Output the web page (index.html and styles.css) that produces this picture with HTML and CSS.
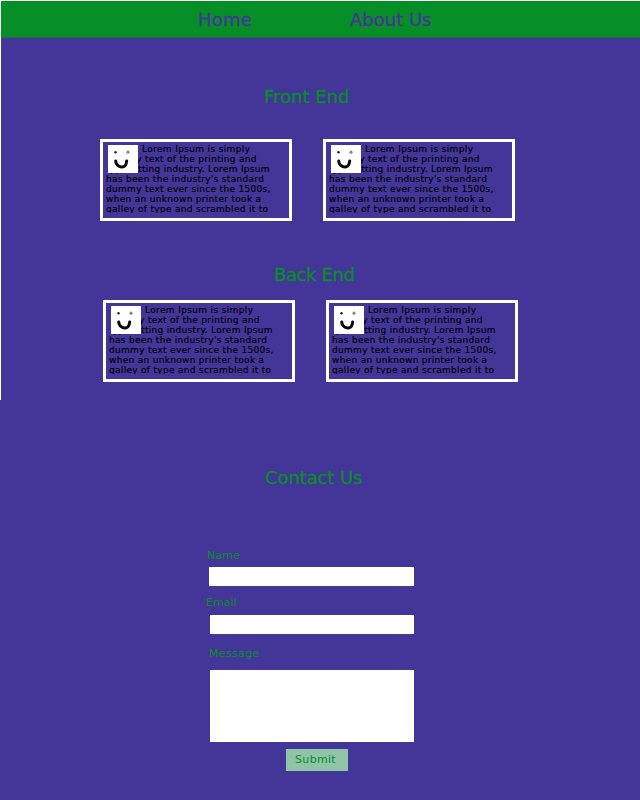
FILE: index.html
```
<!DOCTYPE html>
<html lang="en">
<head>
<meta charset="utf-8">
<title>Home</title>
<link rel="stylesheet" href="styles.css">
</head>
<body>
<svg class="defs" width="0" height="0"><symbol id="face" viewBox="0 0 30 28"><rect width="30" height="28" fill="#fff"/><circle cx="7.500" cy="7.200" r="1.200" fill="#222"/><circle cx="20" cy="7.200" r="1.600" fill="#888"/><path d="M7.700 16C8 19.500 10.500 21.800 13.500 22C16 22 17.500 21 18 19L18.700 16" fill="none" stroke="#080808" stroke-width="3" stroke-linecap="round"/></symbol></svg>
<div class="page">
<nav class="nav"><a class="home">Home</a><a class="about">About Us</a></nav>
<main>
<section class="front"><h2>Front End</h2><div class="cards">
<article class="card"><svg class="face"><use href="#face"/></svg><p><span class="first">Lorem Ipsum is simply</span><span>dummy text of the printing and</span><span>typesetting industry. Lorem Ipsum</span><span>has been the industry's standard</span><span>dummy text ever since the 1500s,</span><span>when an unknown printer took a</span><span>galley of type and scrambled it to</span></p></article>
<article class="card"><svg class="face"><use href="#face"/></svg><p><span class="first">Lorem Ipsum is simply</span><span>dummy text of the printing and</span><span>typesetting industry. Lorem Ipsum</span><span>has been the industry's standard</span><span>dummy text ever since the 1500s,</span><span>when an unknown printer took a</span><span>galley of type and scrambled it to</span></p></article>
</div></section>
<section class="back"><h2>Back End</h2><div class="cards">
<article class="card"><svg class="face"><use href="#face"/></svg><p><span class="first">Lorem Ipsum is simply</span><span>dummy text of the printing and</span><span>typesetting industry. Lorem Ipsum</span><span>has been the industry's standard</span><span>dummy text ever since the 1500s,</span><span>when an unknown printer took a</span><span>galley of type and scrambled it to</span></p></article>
<article class="card"><svg class="face"><use href="#face"/></svg><p><span class="first">Lorem Ipsum is simply</span><span>dummy text of the printing and</span><span>typesetting industry. Lorem Ipsum</span><span>has been the industry's standard</span><span>dummy text ever since the 1500s,</span><span>when an unknown printer took a</span><span>galley of type and scrambled it to</span></p></article>
</div></section>
<section class="contact"><h2>Contact Us</h2>
<form>
<label class="l-name" for="name">Name</label><input id="name">
<label class="l-email" for="email">Email</label><input id="email">
<label class="l-message" for="message">Message</label><textarea id="message"></textarea>
<button type="button">Submit</button>
</form></section>
</main>
</div>
</body>
</html>
```
FILE: styles.css
```
* { box-sizing: border-box; }
body { margin: 0; font-family: "DejaVu Sans", sans-serif; background: #443599; }
.defs { display: block; }
.page { height: 800px; overflow: hidden; border-top: 1px solid #fff; background: linear-gradient(#fff, #fff) 0 0 / 1px 399px no-repeat #443599; }
.nav { height: 37px; margin-left: 1px; background: #078f27; border-bottom: 1px solid #1c6b4a; font-size: 18px; line-height: 37px; color: #443599; display: flex; -webkit-text-stroke: .3px; }
.home { margin-left: 197px; width: 152px; letter-spacing: .2px; }
h2 { margin: 0; font-size: 18px; line-height: 22px; font-weight: 400; color: #078f27; white-space: nowrap; -webkit-text-stroke: .3px; }
.front { height: 178px; padding-top: 48px; }
.front h2 { margin-left: 264px; }
.front .cards { margin: 31px 0 0 100px; }
.back { height: 203px; padding-top: 48px; }
.back h2 { margin-left: 274px; letter-spacing: -.4px; }
.back .cards { margin: 14px 0 0 103px; }
.cards { display: flex; gap: 31px; }
.card { position: relative; width: 192px; height: 82px; border: 3px solid #fff; padding: 2px 0 0 3px; }
.face { position: absolute; left: 5px; top: 3px; width: 30px; height: 28px; box-shadow: -3px -1px #443599; }
.card p { margin: 0; height: 69px; overflow: hidden; font-size: 9px; line-height: 10px; letter-spacing: .3px; color: #000; white-space: nowrap; -webkit-text-stroke: .15px; }
.card span { display: block; }
.card .first { margin-left: 36px; letter-spacing: .35px; }
.contact { padding-top: 48px; }
.contact h2 { margin-left: 265px; letter-spacing: -.1px; }
form { display: flex; flex-direction: column; align-items: flex-start; margin: 60px 0 0 206px; }
label { font-size: 11px; line-height: 14px; color: #078f27; }
input, textarea { display: block; border: 0; padding: 0; background: #fff; resize: none; }
.l-name { margin-left: 1px; letter-spacing: .2px; }
.l-message { margin-left: 3px; margin-top: 13px; letter-spacing: .35px; }
input { width: 205px; height: 19px; margin: 4px 0 0 3px; }
.l-email { margin-top: 10px; }
#email { width: 204px; margin: 5px 0 0 4px; }
textarea { width: 204px; height: 72px; margin: 9px 0 0 4px; }
button { width: 62px; height: 22px; margin: 7px 0 0 80px; padding: 0 3px 1px 0; border: 0; border-radius: 0; background: #8fc4a8; color: #078f27; font: 11px "DejaVu Sans", sans-serif; letter-spacing: .3px; }
```
